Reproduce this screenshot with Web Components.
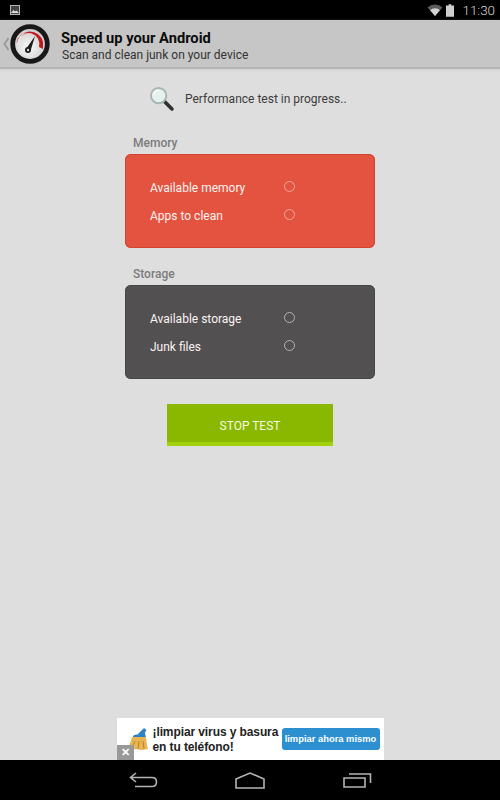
<!DOCTYPE html>
<html>
<head>
<meta charset="utf-8">
<style>
    html, body {
        margin: 0;
        height: 100%;
    }
    body {
        font-family: Roboto, sans-serif;
        background: #dedede;
    }
    app-screen {
        height: 800px;
    }
</style>
</head>
<body>
<app-screen>
    <status-bar slot="status"></status-bar>
    <app-header slot="header" title="Speed up your Android" subtitle="Scan and clean junk on your device"></app-header>
    <test-status>Performance test in progress..</test-status>
    <result-card label="Memory" color="#e4533f" edge="#d2442f" ring="#f0a89b" one="Available memory" two="Apps to clean"></result-card>
    <result-card label="Storage" color="#525051" edge="#474546" ring="#b4b4b4" one="Available storage" two="Junk files" style="margin-top:19px"></result-card>
    <stop-button>STOP TEST</stop-button>
    <ad-banner slot="ad"></ad-banner>
    <nav-bar slot="nav"></nav-bar>
</app-screen>

<script>
class AppScreen extends HTMLElement {
    constructor () {
        super();
        this.attachShadow({ mode: 'open' }).innerHTML = `
            <style>
                :host { display: flex; flex-direction: column; }
                main { flex: 1; display: flex; flex-direction: column; align-items: center; min-height: 0; }
            </style>
            <slot name="status"></slot>
            <slot name="header"></slot>
            <main><slot></slot></main>
            <slot name="ad"></slot>
            <slot name="nav"></slot>`;
    }
}

class StatusBar extends HTMLElement {
    constructor () {
        super();
        this.attachShadow({ mode: 'open' }).innerHTML = `
            <style>
                :host { display: flex; align-items: center; height: 20px; background: #000; color: #d8d8d8; padding: 0 5px 0 10px; font-size: 13.4px; font-weight: 300; }
                .thumb { margin-right: auto; }
                .wifi { margin-right: 3px; }
                .battery { margin-right: 8px; }
            </style>
            <svg class="thumb" width="10" height="10" viewBox="0 0 10 10">
                <rect x=".5" y=".5" width="9" height="9" fill="#444" stroke="#b5b5b5"/>
                <path d="M1 8 L3.5 5 L5 6.5 L6.5 5.5 L9 8 Z" fill="#ddd"/>
            </svg>
            <svg class="wifi" width="16" height="12" viewBox="0 0 15 12">
                <path d="M0 3.4 A11 11 0 0 1 15 3.4 L7.5 12 Z" fill="#5c5c5c"/>
                <path d="M2.6 6.3 A7 7 0 0 1 12.4 6.3 L7.5 12 Z" fill="#d4d4d4"/>
            </svg>
            <svg class="battery" width="8" height="13" viewBox="0 0 9 14">
                <path d="M3 0 H6 V1.5 H9 V14 H0 V1.5 H3 Z" fill="#cfcfcf"/>
            </svg>
            <span>11:30</span>`;
    }
}

class AppHeader extends HTMLElement {
    constructor () {
        super();
        this.attachShadow({ mode: 'open' }).innerHTML = `
            <style>
                :host { display: flex; align-items: center; height: 47px; background: #c6c6c6; border-bottom: 2px solid #b4b4b4; box-shadow: 0 1px 2px #cfcfcf; }
                .back { width: 11px; margin-left: 1px; }
                .logo { margin-left: -2px; }
                .text { margin-left: 11px; padding-top: 3px; }
                .title { font-size: 14.7px; font-weight: 700; color: #0c0c0c; line-height: 18px; }
                .sub { font-size: 12px; color: #333; line-height: 14px; margin: 1px 0 0 1px; }
            </style>
            <svg class="back" height="14" viewBox="0 0 7 14" style="margin-top:1px">
                <path d="M5.5 1 L1.5 7 L5.5 13" fill="none" stroke="#9c9c9c" stroke-width="2"/>
            </svg>
            <svg class="logo" width="40" height="40" viewBox="0 0 40 40">
                <defs>
                    <radialGradient id="dial" cx=".45" cy=".6" r=".7">
                        <stop offset="0" stop-color="#fafafa"/>
                        <stop offset="1" stop-color="#bdbdbd"/>
                    </radialGradient>
                </defs>
                <circle cx="20" cy="20" r="17.3" fill="url(#dial)" stroke="#181818" stroke-width="4.8"/>
                <path d="M6.5 19 A13.5 13.5 0 0 1 33 18 L33 25 L29 23 A9.5 10 0 0 0 9 17 Z" fill="#c4161c"/>
                <path d="M7 20 A13 13 0 0 1 17 8 A14 14 0 0 0 9.5 20 Z" fill="#e9e9e9"/>
                <path d="M16 25 L25 12 L20.5 27 Z" fill="#1c1c1c"/>
                <circle cx="18" cy="26" r="3" fill="#1c1c1c"/>
                <circle cx="18" cy="26" r="1.2" fill="#ddd"/>
            </svg>
            <div class="text">
                <div class="title">${this.getAttribute('title')}</div>
                <div class="sub">${this.getAttribute('subtitle')}</div>
            </div>`;
    }
}

class TestStatus extends HTMLElement {
    constructor () {
        super();
        this.attachShadow({ mode: 'open' }).innerHTML = `
            <style>
                :host { display: flex; align-items: center; width: 250px; height: 30px; margin-top: 15px; color: #3c3c3c; font-size: 12px; }
                svg { margin-left: 24px; margin-right: 11px; margin-top: -2px; }
            </style>
            <svg width="25" height="25" viewBox="0 0 26 26">
                <path d="M15 15 L24 24" stroke="#8a8a8a" stroke-width="4"/>
                <path d="M17 17 L24 24" stroke="#2e2e2e" stroke-width="3.4" stroke-linecap="round"/>
                <circle cx="10" cy="10" r="8" fill="#e6f0ef" stroke="#aab4b2" stroke-width="2"/>
                <path d="M5 9 A5.5 5.5 0 0 1 10 4.5" fill="none" stroke="#fff" stroke-width="1.5"/>
            </svg>
            <slot></slot>`;
    }
}

class ResultCard extends HTMLElement {
    constructor () {
        super();
        const ring = this.getAttribute('ring');
        const row = (text) => `<div class="row"><span class="name">${text}</span><span class="spin"></span></div>`;
        this.attachShadow({ mode: 'open' }).innerHTML = `
            <style>
                :host { display: block; width: 250px; margin-top: 22px; }
                .label { font-size: 12px; font-weight: 500; color: #7c7c7c; line-height: 14px; margin-left: 8px; margin-bottom: 4px; }
                .card { box-sizing: border-box; height: 94px; border-radius: 6px; padding: 20px 0 0 25px;
                    background: ${this.getAttribute('color')}; box-shadow: inset 0 0 0 1px ${this.getAttribute('edge')}; }
                .row { display: flex; height: 28px; align-items: center; color: #fbf3f1; font-size: 12px; }
                .name { width: 134px; }
                .spin { box-sizing: border-box; width: 11px; height: 11px; border-radius: 50%; border: 1.2px solid ${ring}; margin-top: -3px; }
            </style>
            <div class="label">${this.getAttribute('label')}</div>
            <div class="card">${row(this.getAttribute('one'))}${row(this.getAttribute('two'))}</div>`;
    }
}

class StopButton extends HTMLElement {
    constructor () {
        super();
        this.attachShadow({ mode: 'open' }).innerHTML = `
            <style>
                :host { box-sizing: border-box; display: flex; align-items: center; justify-content: center;
                    width: 166px; height: 42px; margin-top: 25px; padding-top: 5px;
                    background: #8ab800; border-bottom: 4px solid #a3d20c; color: #f4f8e0; font-size: 12px; }
            </style>
            <slot></slot>`;
    }
}

class AdBanner extends HTMLElement {
    constructor () {
        super();
        this.attachShadow({ mode: 'open' }).innerHTML = `
            <style>
                :host { display: block; width: 267px; height: 42px; margin: 0 auto; background: #fff; position: relative; overflow: hidden; }
                .inner { display: flex; align-items: center; height: 100%; }
                svg { margin-left: 11px; margin-right: 5px; margin-top: 9px; flex: none; align-self: flex-start; }
                .copy { font-family: "Liberation Sans", sans-serif; font-weight: 700; font-size: 12px; line-height: 15px; color: #222; white-space: nowrap; width: 129px; letter-spacing: -.1px; padding-top: 1px; }
                .cta { width: 98px; height: 22px; border-radius: 3px; background: #2b8fd0; color: #fff; font: 700 9.4px/22px "Liberation Sans", sans-serif; text-align: center; white-space: nowrap; margin-top: -1px; }
                .close { position: absolute; left: 0; bottom: 0; width: 17px; height: 15px; background: #999; color: #fff; font: 700 11px/15px "Liberation Sans", sans-serif; text-align: center; }
            </style>
            <div class="inner">
                <svg width="20" height="24" viewBox="0 0 20 24">
                    <path d="M10 7 L16 1 L18.5 3 L15 9 Z" fill="#2f82c4"/>
                    <path d="M6 8 L17 6 L18 11 L4 11 Z" fill="#2f82c4"/>
                    <path d="M4 10 L18 10 C18.5 15 19 19 20 22 L13 23 L8 22 L2 23 L0 20 C2 17 3 14 4 10 Z" fill="#e8b552"/>
                    <path d="M7 14 L4 22 M11 14 L10 22 M15 14 L16 22" stroke="#b9842c" stroke-width="1"/>
                </svg>
                <div class="copy">¡limpiar virus y basura<br>en tu teléfono!</div>
                <div class="cta">limpiar ahora mismo</div>
            </div>
            <div class="close">✕</div>`;
    }
}

class NavBar extends HTMLElement {
    constructor () {
        super();
        this.attachShadow({ mode: 'open' }).innerHTML = `
            <style>
                :host { display: flex; justify-content: space-between; align-items: center; height: 40px; background: #000; padding: 0 128px 0 129px; }
                svg { fill: none; stroke: #b4b4b4; stroke-width: 1.6; }
                .home { margin-left: -1px; }
            </style>
            <svg width="29" height="16" viewBox="0 0 29 16">
                <path d="M7 1 L1.5 5.5 L7 10 M1.5 5.5 H23 Q27.5 5.5 27.5 10 Q27.5 14.5 23 14.5 H6"/>
            </svg>
            <svg class="home" width="30" height="17" viewBox="0 0 30 17">
                <path d="M1 7 L15 1 L29 7 V16 H1 Z"/>
            </svg>
            <svg width="29" height="16" viewBox="0 0 29 16">
                <path d="M1 6 H22 V15 H1 Z M6 2 H27.5 V11"/>
            </svg>`;
    }
}

customElements.define('app-screen', AppScreen);
customElements.define('status-bar', StatusBar);
customElements.define('app-header', AppHeader);
customElements.define('test-status', TestStatus);
customElements.define('result-card', ResultCard);
customElements.define('stop-button', StopButton);
customElements.define('ad-banner', AdBanner);
customElements.define('nav-bar', NavBar);
</script>
</body>
</html>
